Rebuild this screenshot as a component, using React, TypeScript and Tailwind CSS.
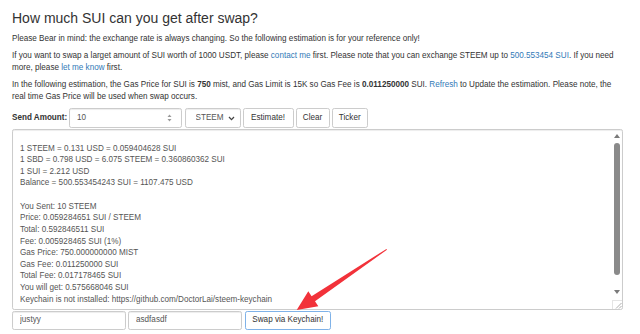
import * as React from "react"

const estimation = `
1 STEEM = 0.131 USD = 0.059404628 SUI
1 SBD = 0.798 USD = 6.075 STEEM = 0.360860362 SUI
1 SUI = 2.212 USD
Balance = 500.553454243 SUI = 1107.475 USD

You Sent: 10 STEEM
Price: 0.059284651 SUI / STEEM
Total: 0.592846511 SUI
Fee: 0.005928465 SUI (1%)
Gas Price: 750.000000000 MIST
Gas Fee: 0.011250000 SUI
Total Fee: 0.017178465 SUI
You will get: 0.575668046 SUI
Keychain is not installed: https://github.com/DoctorLai/steem-keychain`

export default function App() {
  return (
    <div className="relative h-[334px] w-[640px] overflow-hidden bg-white font-['Liberation_Sans',Arial,sans-serif] text-[#333]">
      <div className="ml-[12px] w-[611px] pt-[11.4px]">
        <h3 className="mb-[5.85px] text-[14px] font-normal leading-[1.1]">How much SUI can you get after swap?</h3>

        <p className="mb-[5.85px] text-[8.15px] leading-[11.65px]">
          Please Bear in mind: the exchange rate is always changing. So the following estimation is for your reference only!
        </p>
        <p className="mb-[5.85px] text-[8.15px] leading-[11.65px]">
          If you want to swap a larget amount of SUI worth of 1000 USDT, please{" "}
          <a href="#" className="text-[#337ab7]">contact me</a> first. Please note that you can exchange STEEM up to{" "}
          <a href="#" className="text-[#337ab7]">500.553454 SUI</a>. If you need more, please{" "}
          <a href="#" className="text-[#337ab7]">let me know</a> first.
        </p>
        <p className="mb-[5.85px] text-[8.15px] leading-[11.65px]">
          In the following estimation, the Gas Price for SUI is <b>750</b> mist, and Gas Limit is 15K so Gas Fee is{" "}
          <b>0.011250000</b> SUI. <a href="#" className="text-[#337ab7]">Refresh</a> to Update the estimation. Please
          note, the real time Gas Price will be used when swap occurs.
        </p>

        {/* amount + currency + actions */}
        <div className="mt-[1px] flex h-[19.8px] items-stretch text-[8.15px]">
          <label className="flex w-[57px] shrink-0 items-center font-bold">Send Amount:</label>
          <div className="flex w-[113px] items-center rounded-[2.3px] border border-[#ccc] pl-[7px] pr-[9px] text-[#555] shadow-[inset_0_1px_1px_rgba(0,0,0,0.075)]">
            <input
              defaultValue="10"
              className="min-w-0 flex-1 bg-transparent text-[8.15px] text-[#555] outline-none"
            />
            <svg width="5" height="8" viewBox="0 0 5 8" className="shrink-0">
              <path d="M2.5 0.5 L4.5 3 L0.5 3 Z" fill="#9a9a9a" />
              <path d="M2.5 7.5 L4.5 5 L0.5 5 Z" fill="#9a9a9a" />
            </svg>
          </div>
          <div className="ml-[2.5px] flex w-[56px] items-center rounded-[2.3px] border border-[#ccc] pl-[10px] pr-[5px] shadow-[inset_0_1px_1px_rgba(0,0,0,0.075)]">
            <select className="min-w-0 flex-1 appearance-none bg-transparent text-[8.15px] text-[#555] outline-none">
              <option>STEEM</option>
              <option>SBD</option>
            </select>
            <svg width="7" height="5" viewBox="0 0 7 5" className="shrink-0">
              <path d="M1 1 L3.5 3.6 L6 1" fill="none" stroke="#444" strokeWidth="1.3" />
            </svg>
          </div>
          <button className="ml-[2px] w-[51px] rounded-[2.3px] border border-[#ccc] bg-white text-[#333]">Estimate!</button>
          <button className="ml-[2px] w-[34px] rounded-[2.3px] border border-[#ccc] bg-white text-[#333]">Clear</button>
          <button className="ml-[2px] w-[36.5px] rounded-[2.3px] border border-[#ccc] bg-white text-[#333]">Ticker</button>
        </div>

        {/* estimation output */}
        <div className="mt-[0.5px] flex h-[181px] rounded-[2.3px] border border-[#ccc] shadow-[inset_0_1px_1px_rgba(0,0,0,0.075)]">
          <textarea
            readOnly
            value={estimation}
            className="min-w-0 flex-1 resize-none overflow-hidden bg-transparent px-[7px] pt-[1.2px] text-[8.15px] leading-[11.63px] text-[#555] outline-none"
          />
          <div className="flex w-[10px] shrink-0 flex-col items-center pt-[4.5px]">
            <svg width="6" height="4" viewBox="0 0 6 4">
              <path d="M3 0 L6 4 L0 4 Z" fill="#7a7a7a" />
            </svg>
            <div className="mt-[5px] h-[132px] w-[6px] rounded-full bg-[#8a8a8a]" />
            <svg width="6" height="4" viewBox="0 0 6 4" className="mt-[15px]">
              <path d="M0 0 L6 0 L3 4 Z" fill="#7a7a7a" />
            </svg>
            <div className="mt-[5.5px] flex h-[9px] w-full items-end justify-end border-l border-t border-[#e4e4e4]">
              <svg width="8" height="8" viewBox="0 0 8 8">
                <path d="M7.5 2 L2 7.5 M7.5 5 L5 7.5" stroke="#999" strokeWidth="0.8" />
              </svg>
            </div>
          </div>
        </div>

        {/* keychain swap */}
        <div className="mt-[1px] flex h-[19.6px] gap-[2px] text-[8.15px]">
          <input
            defaultValue="justyy"
            className="w-[114px] rounded-[2.3px] border border-[#ccc] px-[7px] text-[#555] shadow-[inset_0_1px_1px_rgba(0,0,0,0.075)] outline-none"
          />
          <input
            defaultValue="asdfasdf"
            className="w-[114px] rounded-[2.3px] border border-[#ccc] px-[7px] text-[#555] shadow-[inset_0_1px_1px_rgba(0,0,0,0.075)] outline-none"
          />
          <button className="ml-[0.6px] w-[86.4px] rounded-[2.3px] border border-[#7fb2e8] bg-white text-[#333]">
            Swap via Keychain!
          </button>
        </div>
      </div>

      {/* red annotation arrow */}
      <svg
        className="pointer-events-none absolute left-[290px] top-[245px]"
        width="100"
        height="70"
        viewBox="0 0 100 70"
      >
        <polygon
          points="97,4.7 25,56.3 28.3,61.3 6.7,65 18.3,46.3 21.6,51.3 96.4,3.9"
          fill="#f2323a"
        />
      </svg>
    </div>
  )
}
